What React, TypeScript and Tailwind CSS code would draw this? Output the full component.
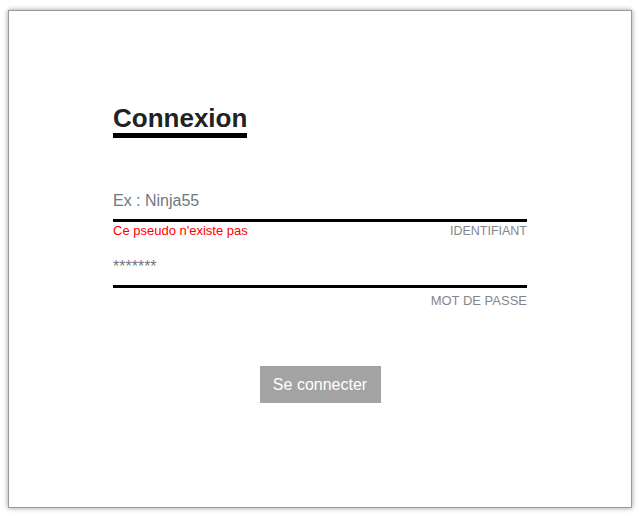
import { useState } from 'react'

export default function App() {
  const [pseudo, setPseudo] = useState('')
  const [password, setPassword] = useState('')

  return (
    <div className="min-h-screen bg-white pl-[8px] pt-[10px] font-['Liberation_Sans',Arial,sans-serif]">
      <div className="w-[624px] h-[498px] border border-[#9a9a9a] bg-white shadow-[0_0_5px_rgba(0,0,0,0.4)] pt-[93px]">
        <form className="w-[414px] mx-auto" onSubmit={(e) => e.preventDefault()}>
          {/* Title */}
          <h1 className="inline-block text-[26px] font-bold leading-[29px] text-[#222] border-b-[5px] border-black">
            Connexion
          </h1>

          {/* Pseudo */}
          <input
            type="text"
            value={pseudo}
            onChange={(e) => setPseudo(e.target.value)}
            placeholder="Ex : Ninja55"
            className="block w-full mt-[54px] text-[16px] leading-[18px] pb-[9px] border-b-[3px] border-black outline-none text-[#333] placeholder:text-[#6f7782]"
          />
          <div className="flex justify-between items-baseline mt-[1px] leading-[15px]">
            <span className="text-[13px] text-[#ff0000]">Ce pseudo n'existe pas</span>
            <span className="text-[12.5px] text-[#85858c]">IDENTIFIANT</span>
          </div>

          {/* Password */}
          <input
            type="text"
            value={password}
            onChange={(e) => setPassword(e.target.value)}
            placeholder="*******"
            className="block w-full mt-[19px] text-[16px] leading-[18px] pb-[9px] border-b-[3px] border-black outline-none text-[#333] placeholder:text-[#6f7782]"
          />
          <div className="flex justify-end mt-[5px] leading-[15px]">
            <span className="text-[13px] text-[#85858c]">MOT DE PASSE</span>
          </div>

          {/* Submit */}
          <div className="flex justify-center mt-[58px]">
            <button
              type="submit"
              className="w-[121px] h-[37px] bg-[#a3a3a3] text-white text-[16px]"
            >
              Se connecter
            </button>
          </div>
        </form>
      </div>
    </div>
  )
}
